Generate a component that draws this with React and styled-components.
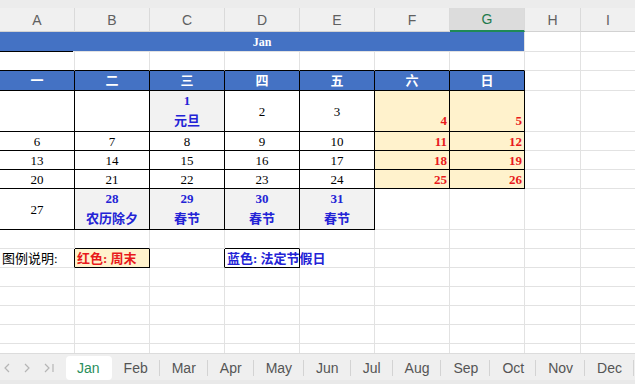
import React from 'react';
import styled, { createGlobalStyle } from 'styled-components';

const GRID = '#e2e2e2';
const B = '#000';
const HEAD_BLUE = '#4472c4';
const YELLOW = '#fff2cc';
const GRAYBG = '#f2f2f2';
const RED = '#e8191b';
const BLUE = '#2323d6';

const GlobalStyle = createGlobalStyle`
  html, body {
    margin: 0;
    padding: 0;
    background: #fff;
  }
  body {
    font-family: "Liberation Serif", "Noto Sans CJK SC", serif;
  }
`;

const Page = styled.div`
  width: 635px;
  height: 384px;
  display: flex;
  flex-direction: column;
  overflow: hidden;
`;

const TopStrip = styled.div`
  height: 8px;
  flex: none;
  background: #ececec;
`;

const Sheet = styled.div`
  flex: 1;
  min-height: 0;
  overflow: hidden;
  display: grid;
  grid-template-columns: repeat(7, 75px) 56px 55px;
  grid-template-rows: 24px 20px 19px 20px 41px 19px 19px 19px 41px 19px 19px repeat(6, 19px);
  font-size: 13px;
`;

const ColHead = styled.div`
  box-sizing: border-box;
  display: flex;
  align-items: center;
  justify-content: center;
  font-family: "Liberation Sans", "Noto Sans", sans-serif;
  font-size: 14px;
  color: ${p => (p.$active ? '#1f7a4d' : '#606060')};
  background: ${p => (p.$active ? '#dcdcdc' : '#f0f0f0')};
  border-right: 1px solid #dadada;
  border-bottom: ${p => (p.$active ? '2px solid #1f8a55' : '1px solid #d2d2d2')};
`;

const justify = { top: 'flex-start', center: 'center', bottom: 'flex-end' };
const alignX = { left: 'flex-start', center: 'center', right: 'flex-end' };

const Cell = styled.div`
  grid-column: span ${p => p.$span || 1};
  box-sizing: border-box;
  min-width: 0;
  display: flex;
  flex-direction: column;
  justify-content: ${p => justify[p.$valign || 'center']};
  align-items: ${p => alignX[p.$align || 'center']};
  padding: ${p => (p.$valign === 'bottom' ? '0 2px 1px 2px' : '0 2px')};
  border-right: 1px solid ${p => p.$rb || GRID};
  border-bottom: 1px solid ${p => p.$bb || GRID};
  background: ${p => p.$bg || 'transparent'};
  color: ${p => p.$color || '#000'};
  font-weight: ${p => (p.$bold ? 700 : 400)};
  line-height: 19px;
  white-space: nowrap;
`;

const TitleCell = styled(Cell)`
  border-bottom: 1px solid;
  border-image: linear-gradient(to right, ${B} 0 74px, ${GRID} 74px) 1;
  border-right: 1px solid ${GRID};
  font-size: 12px;
  color: #fff;
  font-weight: 700;
  padding-top: 1px;
`;

const Line = styled.span`
  display: block;
  line-height: 20px;
`;

const TabBar = styled.div`
  height: 31px;
  flex: none;
  box-sizing: border-box;
  display: flex;
  align-items: flex-start;
  padding-top: 2px;
  background: #efefef;
  border-top: 1px solid #dcdcdc;
  border-bottom: 4px solid #e9e9e9;
  font-family: "Liberation Sans", "Noto Sans", sans-serif;
  font-size: 14px;
`;

const Nav = styled.div`
  width: 66px;
  flex: none;
  height: 24px;
  display: flex;
  align-items: center;
  gap: 12px;
  padding-left: 3px;
  box-sizing: border-box;
`;

const Tab = styled.div`
  height: 24px;
  display: flex;
  align-items: center;
  position: relative;
  padding: 0 12px 0 ${p => (p.$active ? 11 : 12)}px;
  color: ${p => (p.$active ? '#2a8f5c' : '#555')};
  background: ${p => (p.$active ? '#fff' : 'transparent')};
  border-radius: ${p => (p.$active ? '4px' : '0')};
  &::after {
    content: '';
    display: ${p => (p.$sep ? 'block' : 'none')};
    position: absolute;
    right: 0;
    top: 4px;
    height: 16px;
    width: 1px;
    background: #d3d3d3;
  }
`;

const Chevron = ({ dir = 'right', bar = false }) => (
  <svg width={bar ? 12 : 8} height="12" viewBox={bar ? '0 0 12 12' : '0 0 8 12'}>
    <polyline
      points={dir === 'left' ? '6,2 2,6 6,10' : '2,2 6,6 2,10'}
      fill="none"
      stroke="#b5b5b5"
      strokeWidth="1.2"
    />
    {bar && <line x1="10" y1="2" x2="10" y2="10" stroke="#b5b5b5" strokeWidth="1.2" />}
  </svg>
);

const cols = ['A', 'B', 'C', 'D', 'E', 'F', 'G', 'H', 'I'];
const months = ['Jan', 'Feb', 'Mar', 'Apr', 'May', 'Jun', 'Jul', 'Aug', 'Sep', 'Oct', 'Nov', 'Dec'];

const box = { rb: B, bb: B };
const num = n => ({ text: n, ...box });
const wk = (n, valign) => ({ text: n, bg: YELLOW, color: RED, bold: true, align: 'right', valign, ...box });
const hol = (n, name) => ({ lines: [n, name], bg: GRAYBG, color: BLUE, bold: true, ...box });
const empty = n => Array.from({ length: n }, () => ({}));

const rows = [
  Array.from({ length: 7 }, () => ({ bb: B })),
  ['一', '二', '三', '四', '五', '六', '日'].map(d => ({ text: d, bg: HEAD_BLUE, color: '#fff', bold: true, ...box })),
  [{ ...box }, { ...box }, hol('1', '元旦'), num('2'), num('3'), wk('4', 'bottom'), wk('5', 'bottom')],
  [num('6'), num('7'), num('8'), num('9'), num('10'), wk('11'), wk('12')],
  [num('13'), num('14'), num('15'), num('16'), num('17'), wk('18'), wk('19')],
  [num('20'), num('21'), num('22'), num('23'), num('24'), wk('25'), wk('26')],
  [num('27'), hol('28', '农历除夕'), hol('29', '春节'), hol('30', '春节'), hol('31', '春节'), {}, {}],
  [{}, { bb: B }, {}, { bb: B }, {}, {}, {}],
  [
    { text: '图例说明:', align: 'left', rb: B },
    { text: '红色: 周末', align: 'left', bg: YELLOW, color: RED, bold: true, ...box },
    { rb: B },
    { text: '蓝色: 法定节假日', align: 'left', color: BLUE, bold: true, ...box },
    {}, {}, {},
  ],
  ...Array.from({ length: 6 }, () => empty(7)),
];

const renderCell = (c, key) => (
  <Cell
    key={key}
    $rb={c.rb}
    $bb={c.bb}
    $bg={c.bg}
    $color={c.color}
    $bold={c.bold}
    $align={c.align}
    $valign={c.valign}
  >
    {c.lines ? c.lines.map((l, i) => <Line key={i}>{l}</Line>) : c.text}
  </Cell>
);

export default function App() {
  return (
    <Page>
      <GlobalStyle />
      <TopStrip />
      <Sheet>
        {cols.map(c => (
          <ColHead key={c} $active={c === 'G'}>{c}</ColHead>
        ))}

        <TitleCell $span={7} $bg={HEAD_BLUE}>Jan</TitleCell>
        <Cell />
        <Cell />

        {rows.map((row, r) => (
          <React.Fragment key={r}>
            {row.map((c, i) => renderCell(c, i))}
            <Cell />
            <Cell />
          </React.Fragment>
        ))}
      </Sheet>
      <TabBar>
        <Nav>
          <Chevron dir="left" />
          <Chevron dir="right" />
          <Chevron dir="right" bar />
        </Nav>
        {months.map((m, i) => (
          <Tab key={m} $active={i === 0} $sep={i > 0}>{m}</Tab>
        ))}
      </TabBar>
    </Page>
  );
}
